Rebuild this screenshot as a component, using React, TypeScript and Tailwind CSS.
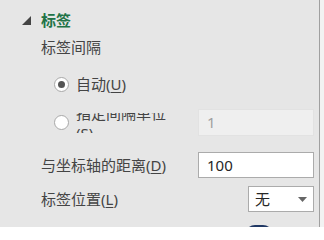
const font = { fontFamily: '"Noto Sans", "Noto Sans CJK SC", sans-serif' };

const Key = ({ k }: { k: string }) => (
  <>
    (<span className="underline underline-offset-2 decoration-1">{k}</span>)
  </>
);

const Radio = ({ checked }: { checked?: boolean }) => (
  <span className="flex h-[15px] w-[15px] shrink-0 items-center justify-center rounded-full border border-[#a8a8a8] bg-white">
    {checked && <span className="h-[7px] w-[7px] rounded-full bg-[#555]" />}
  </span>
);

export default function App() {
  return (
    <div
      className="flex h-[227px] w-[324px] overflow-hidden bg-[#e6e6e6] text-[15px] text-[#444]"
      style={font}
    >
      <div className="flex w-[319px] flex-col">
        {/* section header */}
        <div className="mt-[11px] flex h-[18px] items-center">
          <svg className="ml-[22px]" width="9" height="9" viewBox="0 0 9 9">
            <polygon points="9,0 9,9 0,9" fill="#444" />
          </svg>
          <span className="ml-[10px] font-bold text-[#217346]">标签</span>
        </div>

        <div className="mt-[8px] flex h-[20px] items-center pl-[41px]">标签间隔</div>

        <div className="mt-[17px] flex h-[20px] items-center pl-[54px]">
          <Radio checked />
          <span className="ml-[7px]">
            自动<Key k="U" />
          </span>
        </div>

        <div className="mt-[15px] flex h-[27px] items-center pl-[54px] pr-[5px]">
          <Radio />
          <div className="ml-[7px] flex h-[20px] items-center overflow-hidden">
            <span className="block w-[96px] leading-[20px]">
              指定间隔单位<Key k="S" />
            </span>
          </div>
          <div className="ml-auto flex h-[27px] w-[116px] items-center border border-[#e2e2e2] bg-[#efefef] pl-[8px] text-[#a0a0a0]">
            1
          </div>
        </div>

        <div className="mt-[16px] flex h-[26px] items-center pl-[41px] pr-[5px]">
          <span>
            与坐标轴的距离<Key k="D" />
          </span>
          <div className="ml-auto flex h-[26px] w-[116px] items-center border border-[#ababab] bg-white pl-[8px] text-[#262626]">
            100
          </div>
        </div>

        <div className="mt-[8px] flex h-[26px] items-center pl-[41px] pr-[5px]">
          <span>
            标签位置<Key k="L" />
          </span>
          <div className="ml-auto flex h-[26px] w-[66px] items-center justify-between border border-[#ababab] bg-white pl-[6px] pr-[6px] text-[#262626]">
            <span>无</span>
            <svg width="9" height="5" viewBox="0 0 9 5">
              <polygon points="0,0 9,0 4.5,5" fill="#666" />
            </svg>
          </div>
        </div>

        <div className="ml-[245px] mt-[13px] h-[10px] w-[28px] shrink-0 rounded-t-full bg-[#203864]" />
      </div>
      <div className="w-[1px] bg-[#a0a0a0]" />
      <div className="flex-1 bg-[#f2f2f2]" />
    </div>
  );
}
